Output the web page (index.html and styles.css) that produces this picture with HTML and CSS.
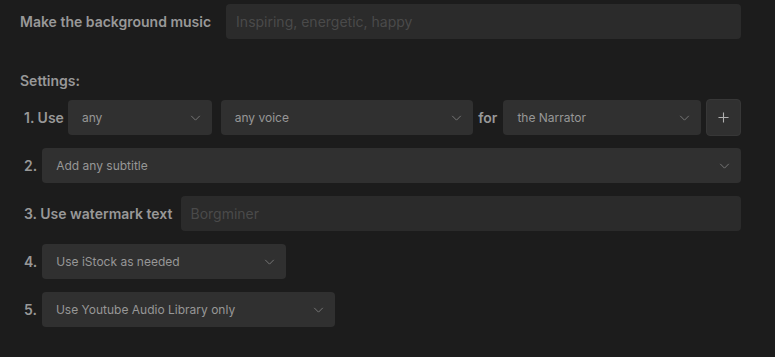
FILE: index.html
```html
<!DOCTYPE html>
<html>
<head>
<meta charset="utf-8">
<link rel="stylesheet" href="styles.css">
</head>
<body>
<div class="page">
  <div class="row music-row">
    <span class="label">Make the background music</span>
    <div class="field grow"><span class="placeholder">Inspiring, energetic, happy</span></div>
  </div>

  <div class="settings-title">Settings:</div>

  <div class="settings">
    <div class="row">
      <span class="label">1. Use</span>
      <div class="select w-any"><span>any</span><svg class="chev" viewBox="0 0 12 7"><path d="M1 1l5 5 5-5"/></svg></div>
      <div class="select w-voice"><span>any voice</span><svg class="chev" viewBox="0 0 12 7"><path d="M1 1l5 5 5-5"/></svg></div>
      <span class="label for">for</span>
      <div class="select w-narr"><span>the Narrator</span><svg class="chev" viewBox="0 0 12 7"><path d="M1 1l5 5 5-5"/></svg></div>
      <button class="plus"><svg viewBox="0 0 12 12"><path d="M6 0.5v11M0.5 6h11"/></svg></button>
    </div>

    <div class="row">
      <span class="label num">2.</span>
      <div class="select grow"><span>Add any subtitle</span><svg class="chev" viewBox="0 0 12 7"><path d="M1 1l5 5 5-5"/></svg></div>
    </div>

    <div class="row">
      <span class="label">3. Use watermark text</span>
      <div class="field grow wm"><span class="placeholder">Borgminer</span></div>
    </div>

    <div class="row">
      <span class="label num">4.</span>
      <div class="select w-istock"><span>Use iStock as needed</span><svg class="chev" viewBox="0 0 12 7"><path d="M1 1l5 5 5-5"/></svg></div>
    </div>

    <div class="row">
      <span class="label num">5.</span>
      <div class="select w-yt"><span>Use Youtube Audio Library only</span><svg class="chev" viewBox="0 0 12 7"><path d="M1 1l5 5 5-5"/></svg></div>
    </div>
  </div>
</div>
</body>
</html>
```

FILE: styles.css
```css
html, body {
  margin: 0;
  padding: 0;
  background: #1c1c1c;
  font-family: Inter, "Noto Sans", sans-serif;
}

.page {
  width: 721px;
  padding: 4px 34px 0 20px;
}

.row {
  display: flex;
  align-items: center;
  height: 35px;
}

.label {
  font-size: 14px;
  font-weight: 600;
  color: #989898;
  white-space: nowrap;
}

.music-row .label {
  margin-right: 15px;
}

.grow {
  flex: 1;
}

.field {
  height: 35px;
  background: #2b2b2b;
  border-radius: 4px;
  display: flex;
  align-items: center;
  padding-left: 10px;
  box-sizing: border-box;
}

.placeholder {
  font-size: 14px;
  color: #4a4a4a;
}

.settings-title {
  font-size: 14px;
  font-weight: 600;
  color: #989898;
  margin-top: 32px;
  height: 20px;
  line-height: 20px;
}

.settings {
  margin-top: 9px;
  padding-left: 4px;
  display: flex;
  flex-direction: column;
  gap: 13px;
}

.settings .row .label {
  margin-right: 4px;
}

.settings .row .label.num {
  margin-right: 5px;
}

.select {
  height: 35px;
  background: #303030;
  border-radius: 4px;
  display: flex;
  align-items: center;
  justify-content: space-between;
  padding: 0 11px 0 14px;
  box-sizing: border-box;
  font-size: 12px;
  color: #979797;
}

.chev {
  width: 11px;
  height: 6px;
  fill: none;
  stroke: #7a7a7a;
  stroke-width: 1.1;
}

.w-any { width: 144px; margin-right: 9px; }
.w-voice { width: 253px; }
.settings .row .label.for { margin: 0 6px 0 5px; }
.w-narr { width: 198px; margin-right: 5px; }
.w-istock { width: 244px; }
.w-yt { width: 293px; }

.wm { margin-left: 4px; }

.plus {
  width: 35px;
  height: 37px;
  background: #303030;
  border: 1px solid #373737;
  border-radius: 4px;
  display: flex;
  align-items: center;
  justify-content: center;
  padding: 0;
}

.plus svg {
  width: 11px;
  height: 11px;
  fill: none;
  stroke: #b0b0b0;
  stroke-width: 1.2;
}
```
